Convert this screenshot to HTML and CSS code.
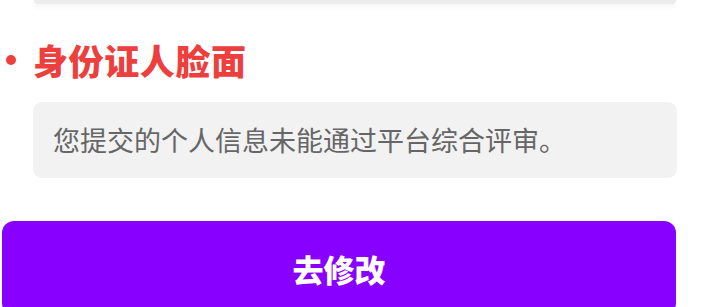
FILE: index.html
```html
<!DOCTYPE html>
<html lang="zh-CN">
<head>
<meta charset="utf-8">
<link rel="stylesheet" href="styles.css">
</head>
<body>
<div class="page">
  <div class="prev-box"></div>
  <div class="section">
    <h2 class="section-title"><span class="dot"></span>身份证人脸面</h2>
    <div class="reason">您提交的个人信息未能通过平台综合评审。</div>
  </div>
  <button class="btn">去修改</button>
</div>
</body>
</html>
```

FILE: styles.css
```css
html, body {
  margin: 0;
  padding: 0;
  background: #ffffff;
  overflow: hidden;
}
body {
  font-family: "Noto Sans CJK SC", "Noto Sans", sans-serif;
}
.page {
  width: 722px;
  height: 307px;
  display: flex;
  flex-direction: column;
}
.prev-box {
  margin-left: 34px;
  width: 642px;
  height: 4px;
  flex-shrink: 0;
  background: #ececec;
  border-radius: 0 0 10px 10px;
  box-shadow: 0 3px 5px rgba(0, 0, 0, 0.05);
}
.section {
  padding-left: 33px;
  width: 644px;
}
.section-title {
  position: relative;
  margin: 34px 0 0 0;
  font-size: 35px;
  line-height: 44px;
  font-weight: 900;
  color: #ee3f3f;
  letter-spacing: 0.6px;
}
.dot {
  position: absolute;
  left: -27px;
  top: 17px;
  width: 10px;
  height: 10px;
  border-radius: 50%;
  background: #ee3f3f;
}
.reason {
  margin-top: 20px;
  height: 76px;
  line-height: 76px;
  padding-left: 20px;
  background: #f2f2f2;
  border-radius: 9px;
  font-size: 27px;
  color: #666666;
}
.btn {
  margin: 43px 0 0 2px;
  width: 674px;
  height: 94px;
  flex-shrink: 0;
  border: none;
  border-radius: 12px;
  background: #8800ff;
  color: #ffffff;
  font-family: "Noto Sans CJK SC", "Noto Sans", sans-serif;
  font-size: 31px;
  font-weight: 900;
  padding: 0;
}
```
